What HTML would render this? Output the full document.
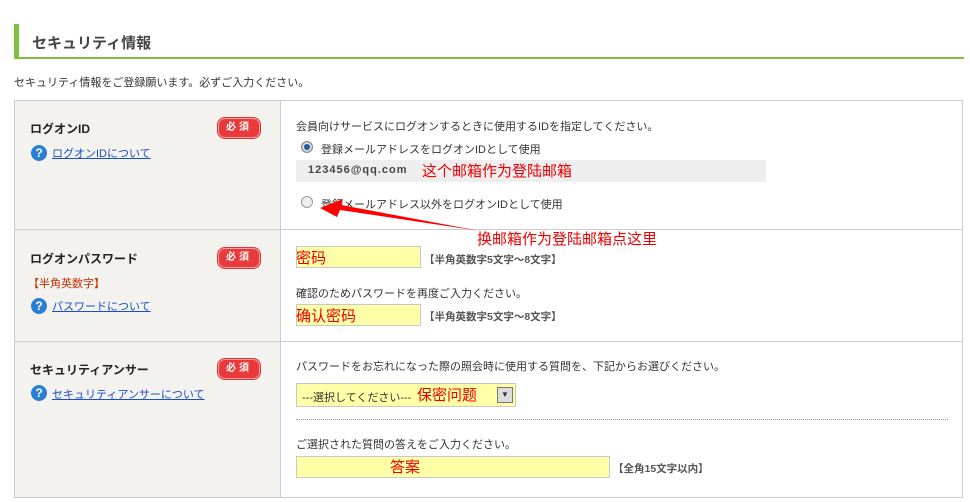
<!DOCTYPE html>
<html><head><meta charset="utf-8"><style>
body{margin:0;width:970px;height:502px;background:#fff;font-family:"Liberation Sans","Noto Sans CJK JP",sans-serif;font-size:11px;color:#333;position:relative;overflow:hidden}
.a{position:absolute;white-space:nowrap}
.red{color:#e00;font-family:"Liberation Sans","Noto Sans CJK SC",sans-serif}
.badge{position:absolute;left:218px;width:40px;height:18px;background:#e83a3a;border:1px solid #f7a0a0;border-radius:7px;box-shadow:0 0 0 1px #d33;color:#fff;font-size:10px;font-weight:bold;text-align:center;line-height:18px;letter-spacing:3px}
.q{position:absolute;left:31px;width:16px;height:16px;border-radius:50%;background:#2a7fd4;color:#fff;font-weight:bold;font-size:12px;text-align:center;line-height:16px}
.lk{color:#1a4fc0;text-decoration:underline}
.inp{position:absolute;background:#ffffa8;border:1px solid #c8c8c8;box-sizing:border-box}
.hint{font-size:10.5px;font-weight:bold;color:#555}
.lbl{font-weight:bold;font-size:12px;color:#222}
</style></head><body>
<div class="a" style="left:14px;top:24px;width:5px;height:35px;background:#7cc23c"></div>
<div class="a" style="left:14px;top:57px;width:950px;height:2px;background:#7cc23c"></div>
<div class="a" style="left:32px;top:32px;font-size:15px;font-weight:bold;color:#444">セキュリティ情報</div>
<div class="a" style="left:14px;top:74px">セキュリティ情報をご登録願います。必ずご入力ください。</div>

<div class="a" style="left:14px;top:100px;width:947px;height:396px;border:1px solid #ccc"></div>
<div class="a" style="left:15px;top:101px;width:265px;height:396px;background:#f3f2ef;border-right:1px solid #ccc"></div>
<div class="a" style="left:15px;top:229px;width:947px;height:1px;background:#ccc"></div>
<div class="a" style="left:15px;top:341px;width:947px;height:1px;background:#ccc"></div>

<!-- row1 -->
<div class="a lbl" style="left:30px;top:120px">ログオンID</div>
<div class="badge" style="top:118px">必須</div>
<div class="q" style="top:145px">?</div>
<div class="a lk" style="left:52px;top:145px">ログオンIDについて</div>
<div class="a" style="left:296px;top:118px">会員向けサービスにログオンするときに使用するIDを指定してください。</div>
<div class="a" style="left:301px;top:141px;width:10px;height:10px;border-radius:50%;background:#1a5fa8;border:1px solid #888;box-shadow:inset 0 0 0 2px #ddd"></div>
<div class="a" style="left:321px;top:141px">登録メールアドレスをログオンIDとして使用</div>
<div class="a" style="left:296px;top:160px;width:470px;height:22px;background:#eee"></div>
<div class="a" style="left:308px;top:164px;font-weight:bold;font-size:11px;color:#444;letter-spacing:1px">123456@qq.com</div>
<div class="a red" style="left:422px;top:160px;font-size:15px">这个邮箱作为登陆邮箱</div>
<div class="a" style="left:301px;top:196px;width:10px;height:10px;border-radius:50%;background:#eee;border:1px solid #999"></div>
<div class="a" style="left:321px;top:196px">登録メールアドレス以外をログオンIDとして使用</div>
<svg class="a" style="left:315px;top:195px" width="180" height="40"><polygon points="5,13 28,4 26,10 165,36 25,15 22,22" fill="#f00"/></svg>
<div class="a red" style="left:477px;top:228px;font-size:15px">换邮箱作为登陆邮箱点这里</div>

<!-- row2 -->
<div class="a lbl" style="left:30px;top:250px">ログオンパスワード</div>
<div class="badge" style="top:248px">必須</div>
<div class="a" style="left:28px;top:275px;color:#c03000;font-size:11px">【半角英数字】</div>
<div class="q" style="top:298px">?</div>
<div class="a lk" style="left:52px;top:298px">パスワードについて</div>
<div class="inp" style="left:296px;top:246px;width:125px;height:22px"></div>
<div class="a red" style="left:296px;top:247px;font-size:15px">密码</div>
<div class="a hint" style="left:424px;top:252px">【半角英数字5文字〜8文字】</div>
<div class="a" style="left:296px;top:285px">確認のためパスワードを再度ご入力ください。</div>
<div class="inp" style="left:296px;top:304px;width:125px;height:22px"></div>
<div class="a red" style="left:296px;top:305px;font-size:15px">确认密码</div>
<div class="a hint" style="left:424px;top:309px">【半角英数字5文字〜8文字】</div>

<!-- row3 -->
<div class="a lbl" style="left:30px;top:361px">セキュリティアンサー</div>
<div class="badge" style="top:359px">必須</div>
<div class="q" style="top:385px">?</div>
<div class="a lk" style="left:52px;top:386px">セキュリティアンサーについて</div>
<div class="a" style="left:296px;top:358px">パスワードをお忘れになった際の照会時に使用する質問を、下記からお選びください。</div>
<div class="inp" style="left:296px;top:383px;width:220px;height:24px"></div>
<div class="a" style="left:302px;top:389px">---選択してください---</div>
<div class="a red" style="left:417px;top:384px;font-size:15px">保密问题</div>
<div class="a" style="left:497px;top:387px;width:14px;height:14px;border:1px solid #777;background:#ddd;font-size:8px;text-align:center;line-height:14px">▼</div>
<div class="a" style="left:296px;top:419px;width:652px;border-top:1px dotted #999"></div>
<div class="a" style="left:296px;top:436px">ご選択された質問の答えをご入力ください。</div>
<div class="inp" style="left:296px;top:456px;width:314px;height:22px"></div>
<div class="a red" style="left:390px;top:456px;font-size:15px">答案</div>
<div class="a hint" style="left:613px;top:461px">【全角15文字以内】</div>
</body></html>
